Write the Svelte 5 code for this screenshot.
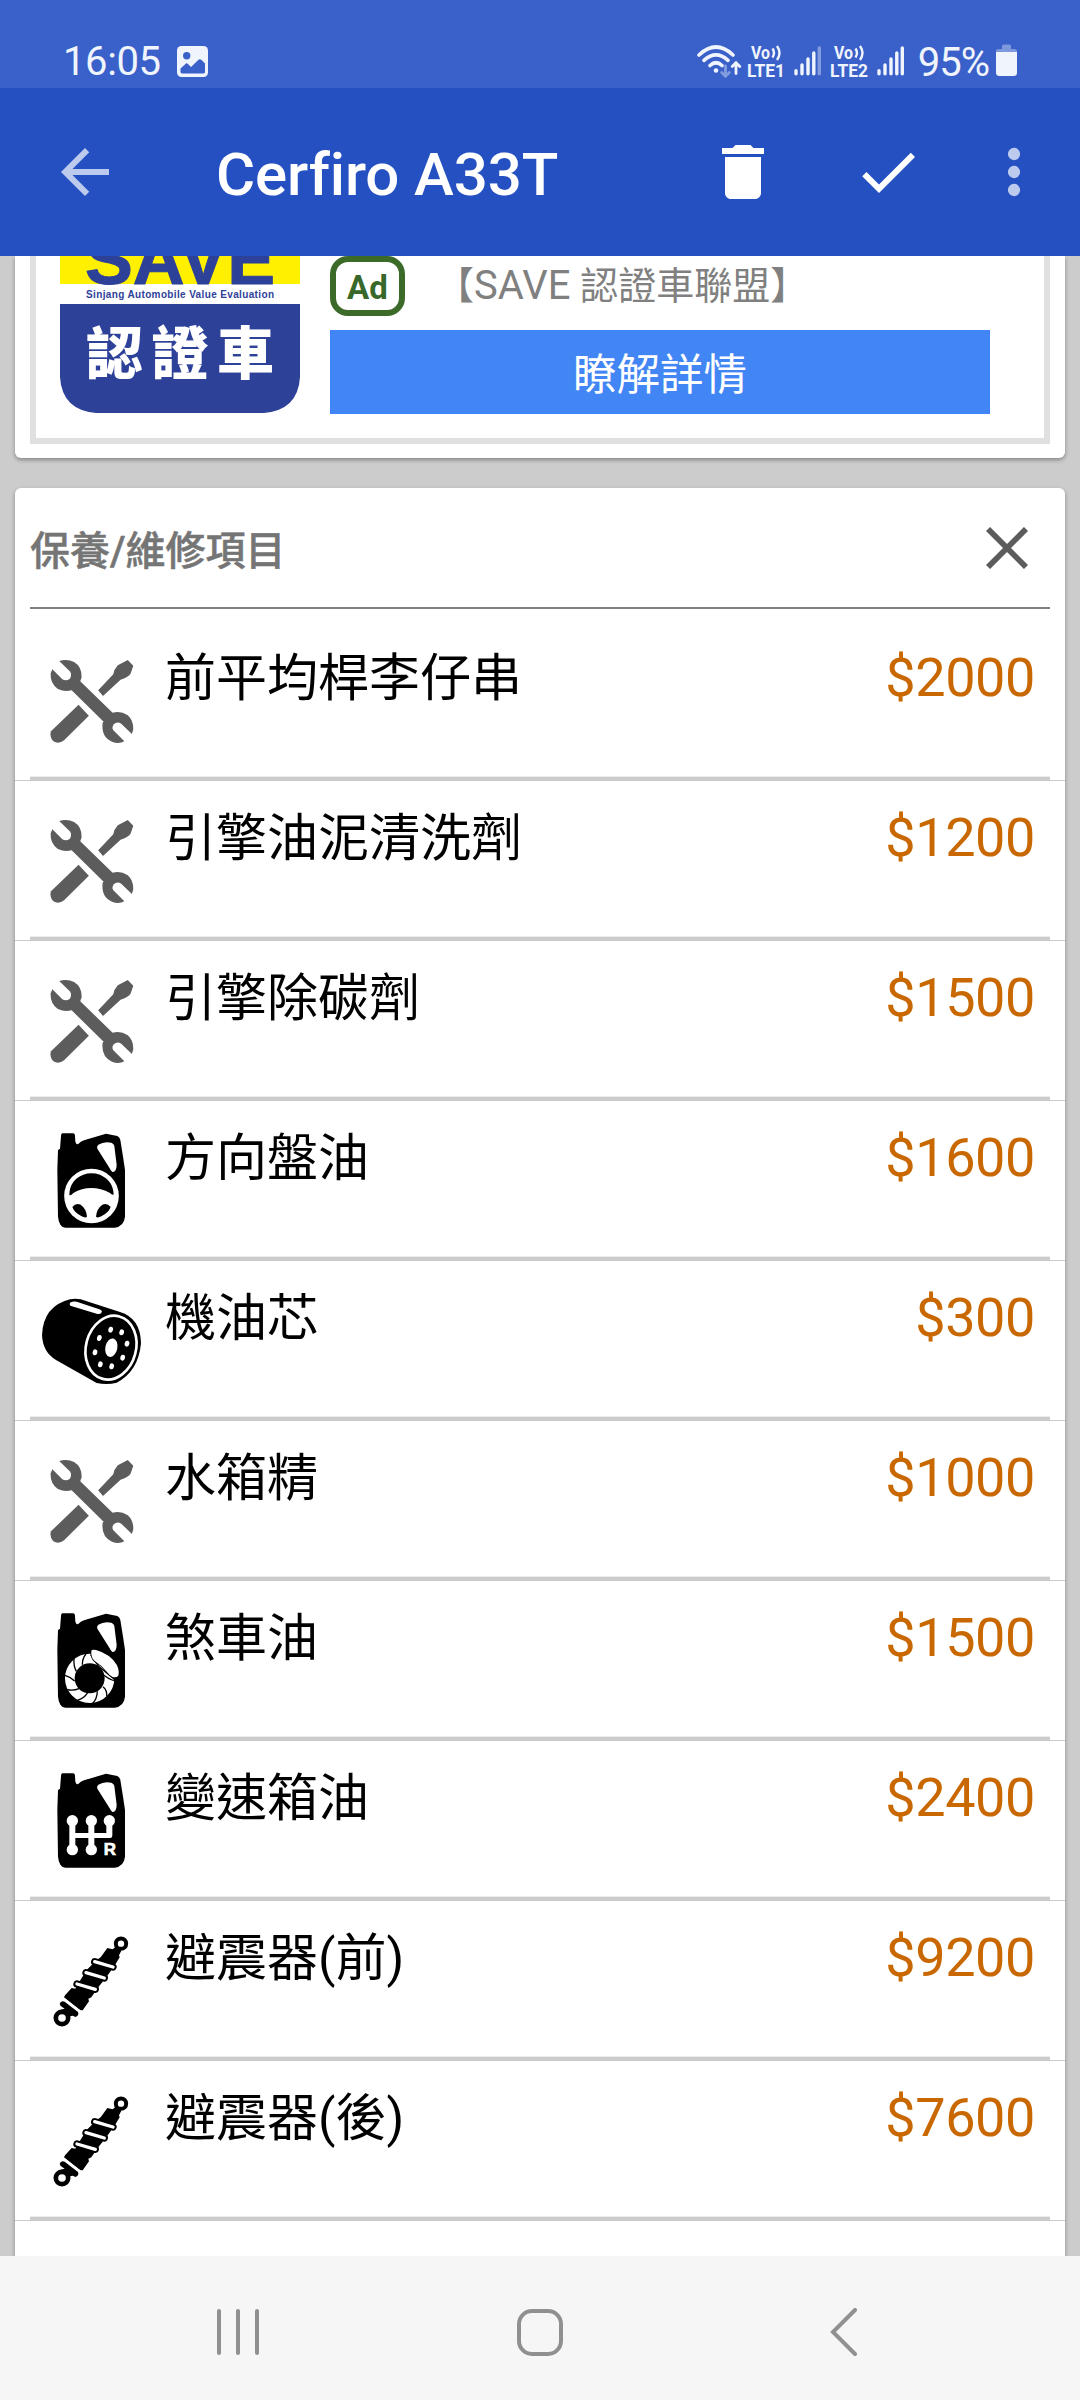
<script lang="ts">
	type Icon = 'tools' | 'steering' | 'filter' | 'brake' | 'gear' | 'shock';

	let items: { name: string; price: number; icon: Icon }[] = [
		{ name: '前平均桿李仔串', price: 2000, icon: 'tools' },
		{ name: '引擎油泥清洗劑', price: 1200, icon: 'tools' },
		{ name: '引擎除碳劑', price: 1500, icon: 'tools' },
		{ name: '方向盤油', price: 1600, icon: 'steering' },
		{ name: '機油芯', price: 300, icon: 'filter' },
		{ name: '水箱精', price: 1000, icon: 'tools' },
		{ name: '煞車油', price: 1500, icon: 'brake' },
		{ name: '變速箱油', price: 2400, icon: 'gear' },
		{ name: '避震器(前)', price: 9200, icon: 'shock' },
		{ name: '避震器(後)', price: 7600, icon: 'shock' }
	];

	const holes = [
		[272, 179],
		[305, 187],
		[321, 221],
		[308, 263],
		[275, 289],
		[241, 283],
		[225, 247],
		[238, 204]
	];
</script>

{#snippet jug()}
	<path
		d="M127 70H160Q165 71 165 77L166 95Q168 103 174 103Q182 94 192 91L258 71L292 78Q300 82 301 90L310 146L315 180V320Q312 349 284 353H136Q117 351 114 320L112 180L114 120L120 116L123 78Q123 71 127 70Z"
	/>
	<path
		fill="#fff"
		d="M235 104Q252 93 274 98Q281 100 283 108L290 165Q289 186 279 186Q274 185 268 173L232 116Q229 108 235 104Z"
	/>
{/snippet}

{#snippet signal(last: number)}
	<svg class="signal" viewBox="0 0 27 32" stroke-width="3.4" stroke-linecap="round">
		<path d="M2 25.700v3M8 20v8.700M14 14v14.700M19.800 8v20.700" />
		<path d="M25.300 3v25.700" opacity={last} />
	</svg>
{/snippet}

{#snippet volte(n: number)}
	<svg class="volte" viewBox="0 0 40 34">
		<text x="4" y="15" font-size="18" textLength="19" lengthAdjust="spacingAndGlyphs">Vo</text>
		<path d="M25.500 4.500q3 4.500 0 9M30 2q5 7 0 14" fill="none" stroke-width="2.400" />
		<text x="0" y="32.600" font-size="19" textLength="38" lengthAdjust="spacingAndGlyphs">LTE{n}</text>
	</svg>
{/snippet}

<div class="screen">
	<div class="status">
		<span class="time">16:05</span>
		<svg class="picture" viewBox="0 0 31 31">
			<rect width="31" height="31" rx="4.500" fill="#f0f4fd" />
			<circle cx="9.700" cy="9.700" r="3.700" fill="#3a61c9" />
			<path
				d="M3.500 22.500L9 17.500Q10 17 11 18L14 21L21.500 13.700Q23 12.700 24.300 13.700L28 17.500V26Q28 27.500 26 27.500H5.500Q3.500 27.500 3.500 26Z"
				fill="#3a61c9"
			/>
		</svg>
		<div class="indicators">
			<svg class="wifi" viewBox="0 0 46 34" fill="none" stroke-width="3.600" stroke-linecap="round">
				<path d="M2 11Q19 -5 36 11M7 16.300Q19 5.500 31 16.300M13 21.500Q19 16 25 21.500" />
				<circle cx="19" cy="26.500" r="2.300" fill="#f0f4fd" stroke="none" />
				<path d="M28.500 22V32M24.700 28.500L28.500 32.300L32.300 28.500" stroke-width="2.800" opacity="0.4" />
				<path d="M39 29.500V20M35.200 22.500L39 18.700L42.800 22.500" stroke-width="2.800" />
			</svg>
			{@render volte(1)}
			{@render signal(0.4)}
			{@render volte(2)}
			{@render signal(1)}
			<span class="percent">95%</span>
			<svg class="battery" viewBox="0 0 21 32">
				<path d="M0 8V7Q0 5 3 5H6V2Q6 .5 8 .5H13Q15 .5 15 2V5H18Q21 5 21 7V8Z" fill="#7e98de" />
				<path d="M0 8H21V28.500Q21 32 17.500 32H3.500Q0 32 0 28.500Z" fill="#f0f4fd" />
			</svg>
		</div>
	</div>

	<header>
		<svg class="back" viewBox="0 0 24 24" fill="#bccaee">
			<path d="M20 11H7.830l5.590-5.590L12 4l-8 8 8 8 1.410-1.410L7.830 13H20v-2z" />
		</svg>
		<h1>Cerfiro A33T</h1>
		<svg class="trash" viewBox="0 0 24 24" fill="#fff">
			<path d="M6 19c0 1.100.9 2 2 2h8c1.100 0 2-.9 2-2V7H6v12zM19 4h-3.500l-1-1h-5l-1 1H5v2h14V4z" />
		</svg>
		<svg class="check" viewBox="0 0 24 24" fill="#fff">
			<path d="M9 16.170L4.830 12l-1.420 1.410L9 19 21 7l-1.410-1.410z" />
		</svg>
		<svg class="more" viewBox="0 0 24 24" fill="#bccaee">
			<circle cx="12" cy="6" r="2.050" />
			<circle cx="12" cy="12" r="2.050" />
			<circle cx="12" cy="18" r="2.050" />
		</svg>
	</header>

	<main>
		<section class="card ad">
			<div class="frame">
				<svg class="logo" viewBox="0 0 240 157">
					<rect width="240" height="28" fill="#fff000" />
					<path d="M0 48H240V121Q238 154 204 157H36Q2 154 0 121Z" fill="#2e4199" />
					<g fill="#2e4199" font-weight="bold">
						<text x="25" y="27.500" font-size="70" stroke="#2e4199" textLength="190" lengthAdjust="spacingAndGlyphs">SAVE</text>
						<text x="26" y="41.500" font-size="10" textLength="188">Sinjang Automobile Value Evaluation</text>
					</g>
					<text class="mark" x="26" y="118" font-size="57" letter-spacing="8.500">認證車</text>
				</svg>
				<div class="info">
					<div class="advertiser">
						<span class="badge">Ad</span>
						<span class="brand">【<b>{'SAVE '}</b>認證車聯盟】</span>
					</div>
					<div class="cta">瞭解詳情</div>
				</div>
			</div>
		</section>

		<section class="card list">
			<div class="heading">
				<h2>保養/維修項目</h2>
				<svg viewBox="0 0 42 42" stroke="#5c5c5c" stroke-width="5.800">
					<path d="M2 2L40 40M40 2L2 40" />
				</svg>
			</div>
			<ul>
				{#each items as item}
					<li>
						{#if item.icon === 'tools'}
							<svg class="icon" viewBox="119 543 290.400 300" preserveAspectRatio="none" fill="#5c5c5c">
								<path
									d="M172 573Q195 566 215 576Q238 590 237 622L233 634L327 728Q350 721 371 736Q388 752 387 778L383 792L352 761Q340 753 329 764Q324 773 329 781L361 814Q345 823 325 815Q293 800 298 758L301 755L208 661Q188 667 168 657Q145 640 147 610L152 598L181 628Q192 635 203 626Q209 615 204 605Z"
								/>
								<path d="M371 570L387 587L379 611Q372 622 350 629L299 678L285 661L329 613Q331 598 342 586Z" />
								<path d="M228 704L258 737L186 811Q170 824 154 813Q143 800 148 784Z" />
							</svg>
						{:else if item.icon === 'filter'}
							<svg class="icon" viewBox="63 63 300 300">
								<path
									d="M150 88Q166 84 182 88L300 126Q362 145 363 220Q355 305 290 338Q262 345 230 339L108 270Q68 246 66 195Q70 108 150 88Z"
								/>
								<path
									fill="#fff"
									d="M152 97Q146 102 151 107L230 131Q243 134 246 125Q245 120 238 118L170 95Q160 93 152 97Z"
								/>
								<g fill="#fff">
									<ellipse
										cx="273"
										cy="233"
										rx="75"
										ry="97"
										fill="none"
										stroke="#fff"
										stroke-width="8"
										transform="rotate(15 273 233)"
									/>
									<ellipse cx="274" cy="233" rx="18" ry="28" transform="rotate(12 274 233)" />
									{#each holes as [x, y]}
										<ellipse cx={x} cy={y} rx="7" ry="9" transform="rotate(15 {x} {y})" />
									{/each}
								</g>
							</svg>
						{:else if item.icon === 'shock'}
							<svg class="icon" viewBox="63 63 300 300" stroke-linecap="round">
								<path
									d="M262 114L278 118L290 109L304 122L297 136L299 142L285 165L260 200L236 230L214 262L205 266L207 274L188 301L180 301L132 262L135 256L155 234L166 236L178 215L200 180L230 150L242 142Z"
								/>
								<path
									d="M119 281Q123 270 134 275L174 306Q178 316 167 321L158 317L140 321L120 300L134 296L122 288Z"
								/>
								<circle cx="303" cy="101" r="15.500" fill="#fff" stroke="#000" stroke-width="12" />
								<circle cx="126" cy="324" r="18.500" fill="#fff" stroke="#000" stroke-width="14" />
								<path
									d="M224 155L279 171M198 188L253 204M171 222L226 238"
									stroke="#000"
									stroke-width="22"
								/>
								<path
									d="M224 155L279 171M198 188L253 204M171 222L226 238"
									stroke="#fff"
									stroke-width="10"
								/>
								<path d="M132 267L182 305" stroke="#fff" stroke-width="6" />
							</svg>
						{:else}
							<svg class="icon" viewBox="63 63 300 300">
								{@render jug()}
								{#if item.icon === 'steering'}
									<circle cx="214.500" cy="258" r="82" fill="#fff" />
									<path
										d="M148 254Q149 210 190 194Q214 186 240 194Q280 212 281 254Q276 256 270 249Q243 234 214 234Q185 234 160 249Q151 259 148 254Z"
									/>
									<path d="M157 291Q168 277 182 284Q199 296 201 320Q196 325 185 319Q163 308 157 291Z" />
									<path d="M272 291Q261 277 247 284Q230 296 228 320Q233 325 244 319Q266 308 272 291Z" />
								{:else if item.icon === 'brake'}
									<circle cx="209" cy="265" r="59.500" fill="none" stroke="#fff" stroke-width="29" />
									<path
										d="M198 192Q187 205 187 224M162 206Q160 228 169 244M135 256Q150 260 164 273M142 299Q160 303 177 296M172 331Q192 326 203 308M218 340Q231 328 232 304M260 320Q262 300 249 290M283 272Q270 270 252 256M212 194L235 228L285 269"
										fill="none"
										stroke="#000"
										stroke-width="4"
									/>
									<path
										d="M214 182Q216 177 228 180Q272 192 291 226Q299 244 295 257Q292 262 282 262Q274 261 263 248Q248 228 225 214Q212 203 214 182Z"
										fill="#fff"
										stroke="#000"
										stroke-width="5"
										paint-order="stroke"
									/>
								{:else}
									<g fill="#fff">
										<circle cx="157" cy="212" r="17" />
										<circle cx="214" cy="212" r="17" />
										<circle cx="268" cy="212" r="17" />
										<circle cx="157" cy="299" r="17" />
										<circle cx="214" cy="299" r="17" />
										<path
											d="M148 212H166V249H205V212H223V249H259V212H277V257Q277 264 270 264H223V299H205V264H166V299H148Z"
										/>
										<text x="251" y="316" font-size="51" font-weight="bold" stroke="#fff" stroke-width="2">R</text>
									</g>
								{/if}
							</svg>
						{/if}
						<span class="name">{item.name}</span>
						<span class="price">${item.price}</span>
					</li>
				{/each}
			</ul>
		</section>
	</main>

	<nav>
		<svg viewBox="0 0 48 48"><path d="M5 3V45M24 3V45M43 3V45" /></svg>
		<svg viewBox="0 0 48 48"><rect x="2" y="3" width="42" height="43" rx="13" /></svg>
		<svg viewBox="0 0 48 48"><path d="M35 2L13 24L35 46" /></svg>
	</nav>
</div>

<style>
	.screen {
		display: flex;
		flex-direction: column;
		width: 1080px;
		height: 2400px;
		overflow: hidden;
		background: #ccc;
		font-family: Roboto, 'Noto Sans CJK TC', sans-serif;
	}

	svg {
		display: block;
		flex: none;
	}

	.status {
		display: flex;
		flex: none;
		box-sizing: border-box;
		height: 88px;
		padding: 44px 63px 0 63px;
		background: #3a61c9;
		color: #f0f4fd;
		font-size: 40px;
		line-height: 35px;
	}

	.time {
		letter-spacing: -0.4px;
	}

	.picture {
		width: 31px;
		height: 31px;
		margin: 2px 0 0 16px;
	}

	.indicators {
		display: flex;
		margin-left: auto;
		stroke: #f0f4fd;
	}

	.wifi {
		width: 46px;
		height: 34px;
	}

	.volte {
		width: 40px;
		height: 34px;
		margin-left: 4px;
		overflow: visible;
		fill: #f0f4fd;
		font-weight: bold;
	}

	.volte text {
		stroke: none;
	}

	.signal {
		width: 27px;
		height: 32px;
		margin: 1px 5px 0 7px;
	}

	.percent {
		margin: 1px 7px 0 9px;
		letter-spacing: -1px;
	}

	.battery {
		width: 21px;
		height: 32px;
		stroke: none;
	}

	header {
		display: flex;
		flex: none;
		align-items: center;
		box-sizing: border-box;
		height: 168px;
		padding: 0 30px 0 49px;
		background: #2450c2;
	}

	header svg {
		width: 72px;
		height: 72px;
	}

	h1 {
		flex: 1;
		margin: 5px 0 0 95px;
		color: #fff;
		font-size: 60px;
		font-weight: 500;
		letter-spacing: -0.1px;
		line-height: 72px;
	}

	.check {
		margin: 0 54px 0 73px;
	}

	main {
		flex: 1;
		min-height: 0;
		overflow: hidden;
		padding: 0 15px;
	}

	.card {
		background: #fff;
		border-radius: 6px;
		box-shadow: 0 2px 4px rgba(0, 0, 0, 0.35);
	}

	.ad {
		box-sizing: border-box;
		height: 202px;
		padding: 0 15px 14px;
		border-radius: 0 0 6px 6px;
	}

	.frame {
		display: flex;
		gap: 30px;
		box-sizing: border-box;
		height: 188px;
		padding: 0 54px 0 24px;
		border: 6px solid #e0e0e0;
		border-top: none;
	}

	.logo {
		width: 240px;
		height: 157px;
		font-family: 'Liberation Sans', Arial, sans-serif;
	}

	.mark {
		fill: #fff;
		font-family: 'Noto Sans CJK TC', sans-serif;
		font-weight: 900;
	}

	.info {
		flex: 1;
	}

	.advertiser {
		display: flex;
		height: 74px;
	}

	.badge {
		box-sizing: border-box;
		width: 75px;
		height: 60px;
		border: 6px solid #3c6a29;
		border-radius: 18px;
		color: #38672a;
		font-size: 33px;
		font-weight: bold;
		line-height: 51px;
		text-align: center;
	}

	.brand {
		margin-left: 31px;
		color: #808080;
		font-size: 38px;
		line-height: 60px;
		white-space: pre;
	}

	.brand b {
		font-size: 40px;
		font-weight: normal;
	}

	.cta {
		height: 84px;
		background: #4285f4;
		color: #fff;
		font-size: 43.500px;
		line-height: 91px;
		text-align: center;
	}

	.list {
		height: 1800px;
		margin-top: 30px;
	}

	.heading {
		display: flex;
		align-items: center;
		justify-content: space-between;
		box-sizing: border-box;
		height: 121px;
		margin: 0 15px;
		padding-right: 22px;
		border-bottom: 2px solid #808080;
	}

	.heading svg {
		width: 42px;
		height: 42px;
	}

	h2 {
		margin: 0;
		color: #757575;
		font-size: 40px;
		font-weight: 500;
		-webkit-text-stroke: 0.5px #757575;
	}

	ul {
		margin: 0;
		padding: 12px 0 0;
		list-style: none;
	}

	li {
		display: flex;
		box-sizing: border-box;
		height: 160px;
		padding: 25px 30px 0 26px;
		border-bottom: 1px solid #ccc;
		background: linear-gradient(#eee 1px, #ccc 1px) 15px 100% / 1020px 4px no-repeat;
		line-height: 63px;
	}

	.icon {
		width: 100px;
		height: 100px;
		margin-top: 5px;
		font-family: 'Liberation Sans', Arial, sans-serif;
	}

	.name {
		flex: 1;
		margin-left: 24px;
		font-size: 51px;
		line-height: 65px;
	}

	.price {
		color: #c96800;
		font-size: 54px;
		letter-spacing: -0.4px;
	}

	nav {
		display: flex;
		flex: none;
		align-items: center;
		justify-content: space-between;
		box-sizing: border-box;
		height: 144px;
		padding: 8px 212px 0 214px;
		background: #f6f6f6;
	}

	nav svg {
		width: 48px;
		height: 48px;
		fill: none;
		stroke: #909090;
		stroke-width: 4;
		stroke-linecap: round;
	}
</style>
